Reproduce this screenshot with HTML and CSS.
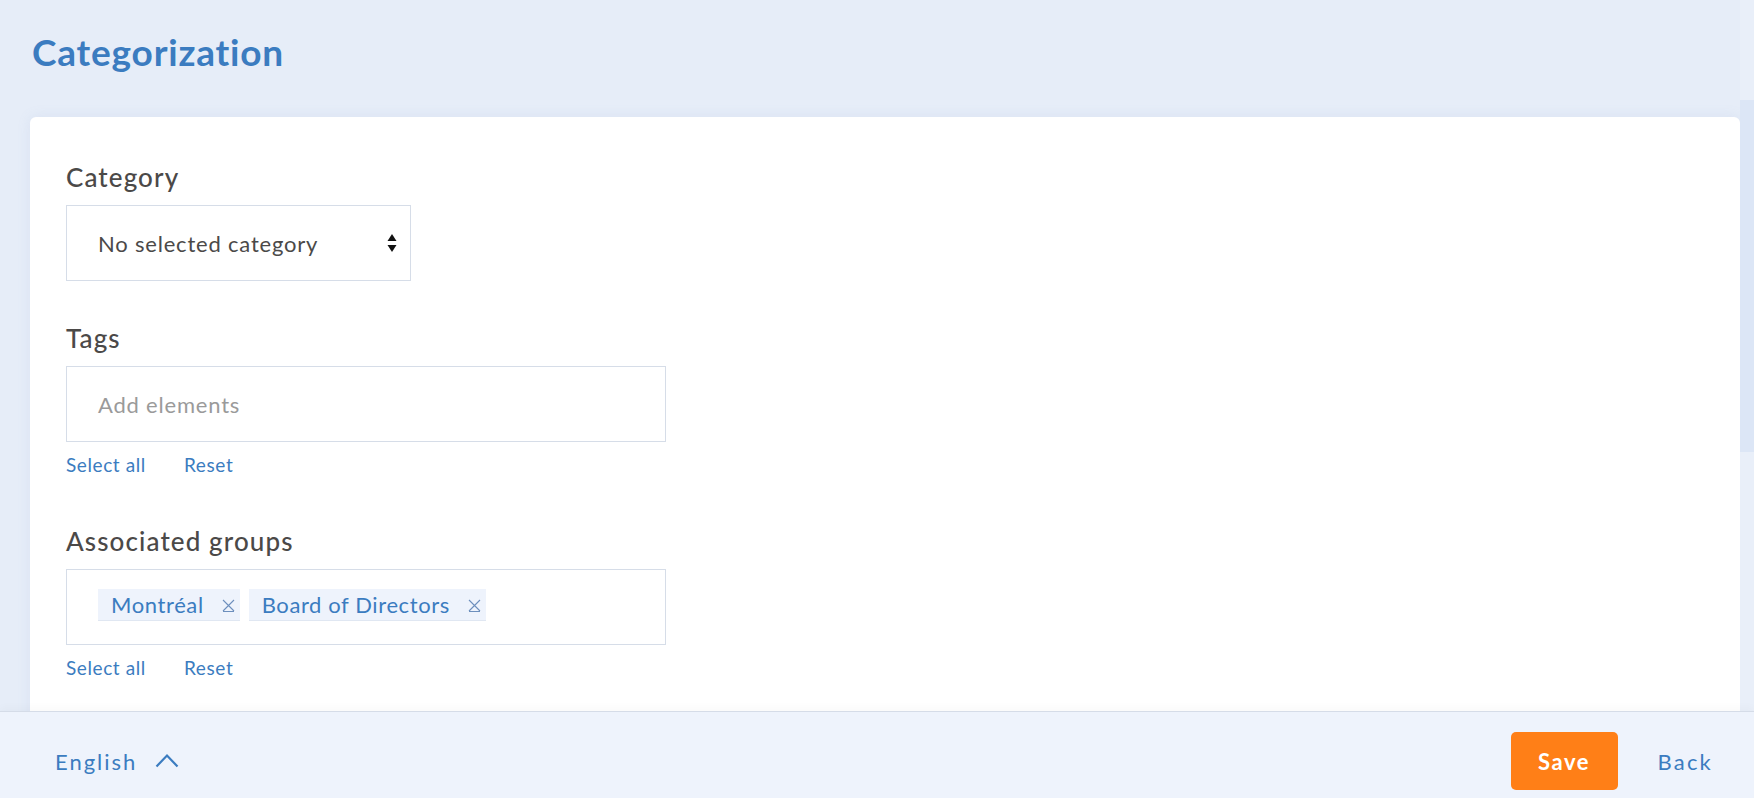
FILE: index.html
```html
<!DOCTYPE html>
<html lang="en">
<head>
<meta charset="utf-8">
<title>Categorization</title>
<link rel="stylesheet" href="styles.css">
</head>
<body>
<div class="page">
  <div class="content">
    <header class="header">
      <h1 class="title">Categorization</h1>
    </header>
    <section class="card">
      <div class="field field-category">
        <label class="label">Category</label>
        <div class="select">
          <span class="select-text">No selected category</span>
          <svg class="select-arrows" width="10" height="20" viewBox="0 0 10 20"><path d="M5 1 L9.5 8 L0.5 8 Z" fill="#111"/><path d="M0.5 12 L9.5 12 L5 19 Z" fill="#111"/></svg>
        </div>
      </div>
      <div class="field field-tags">
        <label class="label">Tags</label>
        <div class="multi">
          <span class="placeholder">Add elements</span>
        </div>
        <div class="links"><a class="link">Select all</a><a class="link">Reset</a></div>
      </div>
      <div class="field">
        <label class="label">Associated groups</label>
        <div class="multi multi-chips">
          <span class="chip">Montréal<svg class="chip-x" width="13" height="13" viewBox="0 0 13 13"><path d="M1 1 L12 12 M12 1 L1 12 M1 12.5 L12 12.5" stroke="#6d8fbd" stroke-width="1.1" fill="none"/></svg></span>
          <span class="chip">Board of Directors<svg class="chip-x" width="13" height="13" viewBox="0 0 13 13"><path d="M1 1 L12 12 M12 1 L1 12 M1 12.5 L12 12.5" stroke="#6d8fbd" stroke-width="1.1" fill="none"/></svg></span>
        </div>
        <div class="links"><a class="link">Select all</a><a class="link">Reset</a></div>
      </div>
    </section>
  </div>
  <div class="scrollbar"><div class="thumb"></div></div>
</div>
<footer class="footer">
  <div class="lang">English<svg class="chev" width="24" height="15" viewBox="0 0 24 15"><path d="M1.5 13.5 L12 2.5 L22.5 13.5" stroke="#3b7cc0" stroke-width="2.2" fill="none"/></svg></div>
  <div class="actions">
    <button class="btn-save">Save</button>
    <a class="btn-back">Back</a>
  </div>
</footer>
</body>
</html>
```

FILE: styles.css
```css
html, body {
  margin: 0;
  padding: 0;
  height: 100%;
}
body {
  display: flex;
  flex-direction: column;
  height: 100vh;
  overflow: hidden;
  background: #e6edf8;
  font-family: Lato, "Liberation Sans", sans-serif;
  color: #4b4948;
}
.page {
  flex: 1;
  min-height: 0;
  display: flex;
  overflow: hidden;
}
.content {
  flex: 1;
  min-width: 0;
  padding-left: 30px;
  display: flex;
  flex-direction: column;
}
.header {
  flex: none;
  height: 117px;
  box-sizing: border-box;
  padding: 30px 0 0 2px;
}
.title {
  margin: 0;
  font-size: 37px;
  line-height: 44px;
  font-weight: 700;
  letter-spacing: 0.8px;
  color: #3b7cc0;
}
.card {
  flex: 1 0 auto;
  background: #fff;
  border-radius: 6px 6px 0 0;
  padding: 45px 0 0 36px;
  box-shadow: 0 0 14px rgba(120, 150, 200, 0.12);
}
.field {
  margin-bottom: 47px;
}
.field-category {
  margin-bottom: 42px;
}
.field-tags {
  margin-bottom: 50px;
}
.label {
  display: block;
  font-size: 26px;
  line-height: 30px;
  font-weight: 500;
  letter-spacing: 1.1px;
  color: #4b4948;
  margin-bottom: 13px;
}
.select {
  width: 345px;
  height: 76px;
  box-sizing: border-box;
  border: 1px solid #d6dde8;
  display: flex;
  align-items: center;
  justify-content: space-between;
  padding: 0 13px 0 31px;
}
.select-text {
  font-size: 22px;
  letter-spacing: 0.8px;
  color: #4b4948;
}
.select-arrows {
  display: block;
}
.multi {
  width: 600px;
  height: 76px;
  box-sizing: border-box;
  border: 1px solid #d6dde8;
  display: flex;
  align-items: center;
  padding: 0 31px;
}
.multi-chips {
  align-items: flex-start;
  padding-top: 19px;
  gap: 9px;
}
.placeholder {
  font-size: 22px;
  letter-spacing: 0.8px;
  color: #9a9a9a;
}
.chip {
  display: flex;
  align-items: center;
  height: 32px;
  box-sizing: border-box;
  padding: 0 5px 0 13px;
  background: #eef3fc;
  border-bottom: 1px solid #e0e7f2;
  font-size: 22px;
  letter-spacing: 0.6px;
  color: #3b7cc0;
}
.chip-x {
  margin-left: 18px;
  margin-top: 2px;
}
.links {
  display: flex;
  gap: 38px;
  margin-top: 10px;
  height: 24px;
  align-items: center;
}
.link {
  font-size: 19px;
  letter-spacing: 0.6px;
  color: #3b7cc0;
  cursor: pointer;
}
.scrollbar {
  width: 14px;
  display: flex;
  flex-direction: column;
  background: #e9eff9;
  padding-top: 100px;
}
.thumb {
  height: 352px;
  background: #dce6f6;
}
.footer {
  height: 87px;
  flex: none;
  box-sizing: border-box;
  border-top: 1px solid #d5dce8;
  background: #eef3fc;
  display: flex;
  align-items: center;
  justify-content: space-between;
  padding: 12px 41px 0 55px;
  box-shadow: 0 -4px 8px rgba(0, 0, 0, 0.025);
  position: relative;
}
.lang {
  display: flex;
  align-items: center;
  font-size: 22px;
  letter-spacing: 2px;
  color: #3b7cc0;
}
.chev {
  margin-left: 18px;
  margin-top: -2px;
}
.actions {
  display: flex;
  align-items: center;
  gap: 40px;
}
.btn-save {
  width: 107px;
  height: 58px;
  border: none;
  border-radius: 5px;
  background: #ff7f17;
  color: #fff;
  font-family: Lato, "Liberation Sans", sans-serif;
  font-size: 22px;
  font-weight: 700;
  letter-spacing: 1.5px;
  padding: 0;
}
.btn-back {
  font-size: 22px;
  letter-spacing: 2.2px;
  color: #3b7cc0;
}
```
